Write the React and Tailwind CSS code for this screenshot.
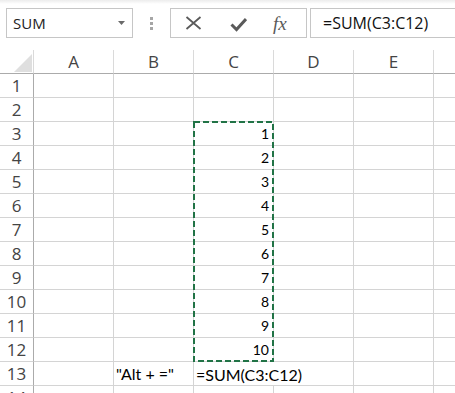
import React from "react";

const COLS = ["A", "B", "C", "D", "E"];

function Cell({ r, c }) {
  const base = "border-r border-b border-[#d4d4d4] flex items-end whitespace-nowrap overflow-visible";
  if (c === "C" && r >= 3 && r <= 12) {
    return (
      <div className={base + " justify-end pr-[4px] pb-[3px] font-['Lato'] text-[14px] leading-[16px] text-black"}>
        {r - 2}
      </div>
    );
  }
  if (c === "B" && r === 13) {
    return (
      <div className={base + " pl-[2px] pb-[3px] font-['Lato'] text-[16px] leading-[16px] text-black"}>
        "Alt + ="
      </div>
    );
  }
  if (c === "C" && r === 13) {
    return (
      <div className="border-b border-[#d4d4d4] flex items-end whitespace-nowrap overflow-visible pl-[2px] pb-[2px] font-['Lato'] text-[16px] leading-[16px] text-black relative z-10">
        =SUM(C3:C12)
      </div>
    );
  }
  return <div className={base} />;
}

export default function App() {
  const rows = Array.from({ length: 14 }, (_, i) => i + 1);
  return (
    <div className="w-[455px] h-[393px] overflow-hidden bg-white relative">
      {/* toolbar */}
      <div className="h-[50px] flex items-start pt-[8px] pl-[6px] bg-[linear-gradient(#ececec,#ffffff_4px)]">
        <div className="w-[127px] h-[30px] shrink-0 border border-[#c6c6c6] bg-white flex items-center justify-between pl-[6px] pr-[7px] font-['Open_Sans'] text-[15px] text-[#222]">
          <span>SUM</span>
          <svg width="7" height="4" viewBox="0 0 7 4">
            <polygon points="0,0 7,0 3.5,4" fill="#6a6a6a" />
          </svg>
        </div>
        <div className="w-[37px] h-[30px] shrink-0 flex flex-col items-center justify-center gap-[2px]">
          <div className="w-[3px] h-[3px] bg-[#a6a6a6]" />
          <div className="w-[3px] h-[3px] bg-[#a6a6a6]" />
          <div className="w-[3px] h-[3px] bg-[#a6a6a6]" />
        </div>
        <div className="w-[137px] h-[30px] shrink-0 border border-[#c6c6c6] bg-white flex items-center pl-[14px]">
          <svg width="17" height="14" viewBox="0 0 17 14">
            <path d="M1.5 1 L15.5 13 M15.5 1 L1.5 13" stroke="#5a5a5a" strokeWidth="1.8" fill="none" />
          </svg>
          <svg width="17" height="15" viewBox="0 0 17 15" className="ml-[28px] mt-[2px]">
            <path d="M1.5 7.5 L6.5 12.5 L16 2" stroke="#5a5a5a" strokeWidth="3" fill="none" />
          </svg>
          <span className="ml-[26px] font-['Liberation_Serif'] italic text-[19px] text-[#5a5a5a] leading-none">fx</span>
        </div>
        <div className="ml-[3px] w-[160px] h-[30px] shrink-0 border border-[#c6c6c6] bg-white flex items-center pl-[12px] font-['Open_Sans'] text-[16px] text-[#111] whitespace-nowrap">
          =SUM(C3:C12)
        </div>
      </div>

      {/* grid */}
      <div className="relative grid grid-cols-[34px_80px_80px_80px_80px_80px_1fr] auto-rows-[24px]">
        <div className="border-r border-r-[#dadada] border-b border-b-[#ababab] flex justify-end items-end pr-[1px] pb-[1px]">
          <svg width="18" height="18" viewBox="0 0 18 18">
            <polygon points="18,0 18,18 0,18" fill="#dfdfdf" />
          </svg>
        </div>
        {COLS.map((c) => (
          <div
            key={c}
            className="border-r border-r-[#dadada] border-b border-b-[#ababab] flex items-center justify-center font-['Open_Sans'] text-[17px] leading-[23px] text-[#444]"
          >
            {c}
          </div>
        ))}
        <div className="border-b border-b-[#ababab]" />

        {rows.map((r) => (
          <React.Fragment key={r}>
            <div className="border-r border-r-[#ababab] border-b border-b-[#d4d4d4] flex items-center justify-center font-['Open_Sans'] text-[17px] leading-[23px] text-[#444]">
              {r}
            </div>
            {COLS.map((c) => (
              <Cell key={c} r={r} c={c} />
            ))}
            <div className="border-b border-[#d4d4d4]" />
          </React.Fragment>
        ))}

        <svg
          className="absolute left-[193px] top-[71px] z-20 pointer-events-none"
          width="81"
          height="241"
          viewBox="0 0 81 241"
        >
          <rect x="1" y="1" width="79" height="239" fill="none" stroke="#217346" strokeWidth="2" strokeDasharray="6 3" />
        </svg>
      </div>
    </div>
  );
}
